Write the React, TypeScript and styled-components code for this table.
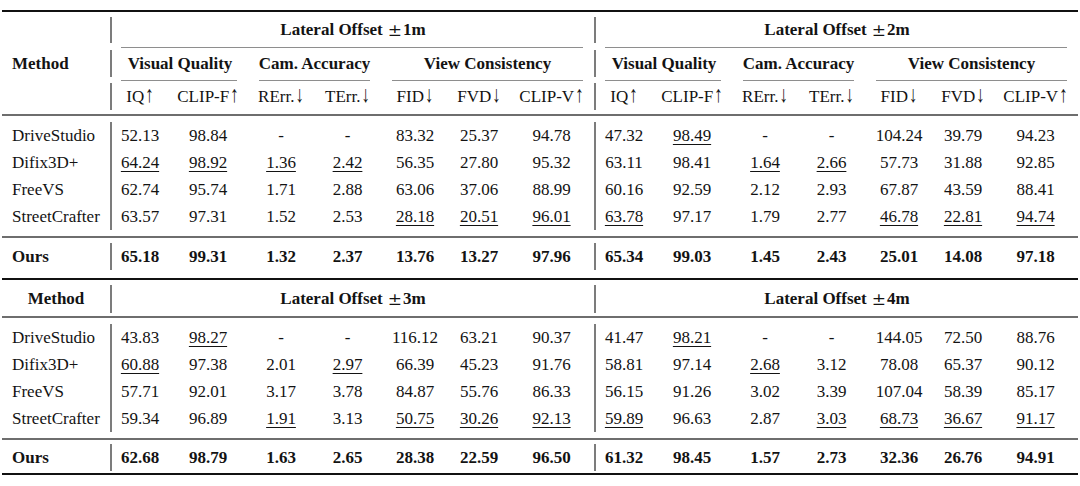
import React from 'react';
import styled, { createGlobalStyle } from 'styled-components';

// one method column + two groups of seven metric columns
const COLS = '108px repeat(2, 58px 80px 66px 67px 68px 60px 85px)';

const GlobalStyle = createGlobalStyle`
	body {
		margin: 0;
		background: #fff;
		color: #131313;
		font-family: 'Liberation Serif', 'Times New Roman', serif;
	}
`;

const Page = styled.div`
	width: 1076px;
	padding: 10px 2px 0;
	font-size: 17px;
`;

const Rule = styled.div<{ $w: number; $c: string }>`
	height: ${(p) => p.$w}px;
	background: ${(p) => p.$c};
`;

const TrimRow = styled.div`
	display: grid;
	grid-template-columns: ${COLS};
	height: 1px;
`;

const Trim = styled.div<{ $from: number; $to: number }>`
	grid-column: ${(p) => p.$from} / ${(p) => p.$to};
	margin: 0 11px;
	background: #8e8e8e;
`;

const Block = styled.div<{ $pad: string }>`
	padding: ${(p) => p.$pad};
`;

const Row = styled.div<{ $h: number }>`
	display: grid;
	grid-template-columns: ${COLS};
	grid-auto-rows: ${(p) => p.$h}px;
`;

const Cell = styled.div<{ $bar?: boolean; $span?: number; $bold?: boolean; $left?: boolean }>`
	display: flex;
	align-items: center;
	justify-content: ${(p) => (p.$left ? 'flex-start' : 'center')};
	padding-left: ${(p) => (p.$left ? '10px' : '0')};
	grid-column: span ${(p) => p.$span ?? 1};
	border-left: ${(p) => (p.$bar ? '2px solid #7c7c7c' : 'none')};
	font-weight: ${(p) => (p.$bold ? 700 : 400)};
	white-space: nowrap;
`;

const Under = styled.span`
	text-decoration: underline;
	text-decoration-thickness: 1px;
	text-underline-offset: 3px;
`;

const Pm = styled.span`
	font-family: 'DejaVu Serif', serif;
	font-weight: 400;
	margin: 0 1px 0 5px;
`;

const Arrow = styled.span`
	display: inline-block;
	margin-left: 1px;
	transform: scale(1, 1.35) translateY(-1px);
`;

type Metric = { label: string; up: boolean };

const METRICS: Metric[] = [
	{ label: 'IQ', up: true },
	{ label: 'CLIP-F', up: true },
	{ label: 'RErr.', up: false },
	{ label: 'TErr.', up: false },
	{ label: 'FID', up: false },
	{ label: 'FVD', up: false },
	{ label: 'CLIP-V', up: true }
];

type DataRow = { name: string; vals: string[] };

// a leading "_" marks an underlined (second best) value
const top: DataRow[] = [
	{ name: 'DriveStudio', vals: ['52.13', '98.84', '-', '-', '83.32', '25.37', '94.78', '47.32', '_98.49', '-', '-', '104.24', '39.79', '94.23'] },
	{ name: 'Difix3D+', vals: ['_64.24', '_98.92', '_1.36', '_2.42', '56.35', '27.80', '95.32', '63.11', '98.41', '_1.64', '_2.66', '57.73', '31.88', '92.85'] },
	{ name: 'FreeVS', vals: ['62.74', '95.74', '1.71', '2.88', '63.06', '37.06', '88.99', '60.16', '92.59', '2.12', '2.93', '67.87', '43.59', '88.41'] },
	{ name: 'StreetCrafter', vals: ['63.57', '97.31', '1.52', '2.53', '_28.18', '_20.51', '_96.01', '_63.78', '97.17', '1.79', '2.77', '_46.78', '_22.81', '_94.74'] }
];
const topOurs = ['65.18', '99.31', '1.32', '2.37', '13.76', '13.27', '97.96', '65.34', '99.03', '1.45', '2.43', '25.01', '14.08', '97.18'];

const bottom: DataRow[] = [
	{ name: 'DriveStudio', vals: ['43.83', '_98.27', '-', '-', '116.12', '63.21', '90.37', '41.47', '_98.21', '-', '-', '144.05', '72.50', '88.76'] },
	{ name: 'Difix3D+', vals: ['_60.88', '97.38', '2.01', '_2.97', '66.39', '45.23', '91.76', '58.81', '97.14', '_2.68', '3.12', '78.08', '65.37', '90.12'] },
	{ name: 'FreeVS', vals: ['57.71', '92.01', '3.17', '3.78', '84.87', '55.76', '86.33', '56.15', '91.26', '3.02', '3.39', '107.04', '58.39', '85.17'] },
	{ name: 'StreetCrafter', vals: ['59.34', '96.89', '_1.91', '3.13', '_50.75', '_30.26', '_92.13', '_59.89', '96.63', '2.87', '_3.03', '_68.73', '_36.67', '_91.17'] }
];
const bottomOurs = ['62.68', '98.79', '1.63', '2.65', '28.38', '22.59', '96.50', '61.32', '98.45', '1.57', '2.73', '32.36', '26.76', '94.91'];

function Value({ v }: { v: string }) {
	return v.startsWith('_') ? <Under>{v.slice(1)}</Under> : <>{v}</>;
}

function Values({ vals, bold }: { vals: string[]; bold?: boolean }) {
	return (
		<>
			{vals.map((v, i) => (
				<Cell key={i} $bar={i % 7 === 0} $bold={bold}>
					<Value v={v} />
				</Cell>
			))}
		</>
	);
}

function Body({ rows, pad }: { rows: DataRow[]; pad: string }) {
	return (
		<Block $pad={pad}>
			{rows.map((r) => (
				<Row key={r.name} $h={27}>
					<Cell $left>{r.name}</Cell>
					<Values vals={r.vals} />
				</Row>
			))}
		</Block>
	);
}

function OursRow({ vals, pad }: { vals: string[]; pad: string }) {
	return (
		<Block $pad={pad}>
			<Row $h={27}>
				<Cell $left $bold>
					Ours
				</Cell>
				<Values vals={vals} bold />
			</Row>
		</Block>
	);
}

function Offset({ m }: { m: number }) {
	return (
		<Cell $bar $span={7} $bold>
			Lateral Offset<Pm>±</Pm>
			{m}m
		</Cell>
	);
}

function GroupTrims() {
	return (
		<TrimRow>
			<Trim $from={2} $to={4} />
			<Trim $from={4} $to={6} />
			<Trim $from={6} $to={9} />
			<Trim $from={9} $to={11} />
			<Trim $from={11} $to={13} />
			<Trim $from={13} $to={16} />
		</TrimRow>
	);
}

export default function App() {
	return (
		<Page>
			<GlobalStyle />
			<Rule $w={2} $c='#111' />

			<Block $pad='5px 0 4px'>
				<Row $h={26}>
					<Cell />
					<Offset m={1} />
					<Offset m={2} />
				</Row>
			</Block>
			<TrimRow>
				<Trim $from={2} $to={9} />
				<Trim $from={9} $to={16} />
			</TrimRow>

			<Block $pad='2px 0 3px'>
				<Row $h={27}>
					<Cell $left $bold>
						Method
					</Cell>
					{[0, 1].map((g) => (
						<React.Fragment key={g}>
							<Cell $bar $span={2} $bold>
								Visual Quality
							</Cell>
							<Cell $span={2} $bold>
								Cam. Accuracy
							</Cell>
							<Cell $span={3} $bold>
								View Consistency
							</Cell>
						</React.Fragment>
					))}
				</Row>
			</Block>
			<GroupTrims />

			<Block $pad='2px 0 4px'>
				<Row $h={27}>
					<Cell />
					{[...METRICS, ...METRICS].map((m, i) => (
						<Cell key={i} $bar={i % 7 === 0}>
							{m.label}
							<Arrow>{m.up ? '↑' : '↓'}</Arrow>
						</Cell>
					))}
				</Row>
			</Block>
			<Rule $w={2} $c='#6e6e6e' />

			<Body rows={top} pad='6px 0 6px' />
			<Rule $w={2} $c='#6e6e6e' />
			<OursRow vals={topOurs} pad='5px 0 8px' />
			<Rule $w={2} $c='#111' />

			<Block $pad='5px 0 3px'>
				<Row $h={28}>
					<Cell $bold>Method</Cell>
					<Offset m={3} />
					<Offset m={4} />
				</Row>
			</Block>
			<Rule $w={2} $c='#6e6e6e' />

			<Body rows={bottom} pad='6px 0 6px' />
			<Rule $w={2} $c='#6e6e6e' />
			<OursRow vals={bottomOurs} pad='4px 0 2px' />
			<Rule $w={2} $c='#111' />
		</Page>
	);
}
